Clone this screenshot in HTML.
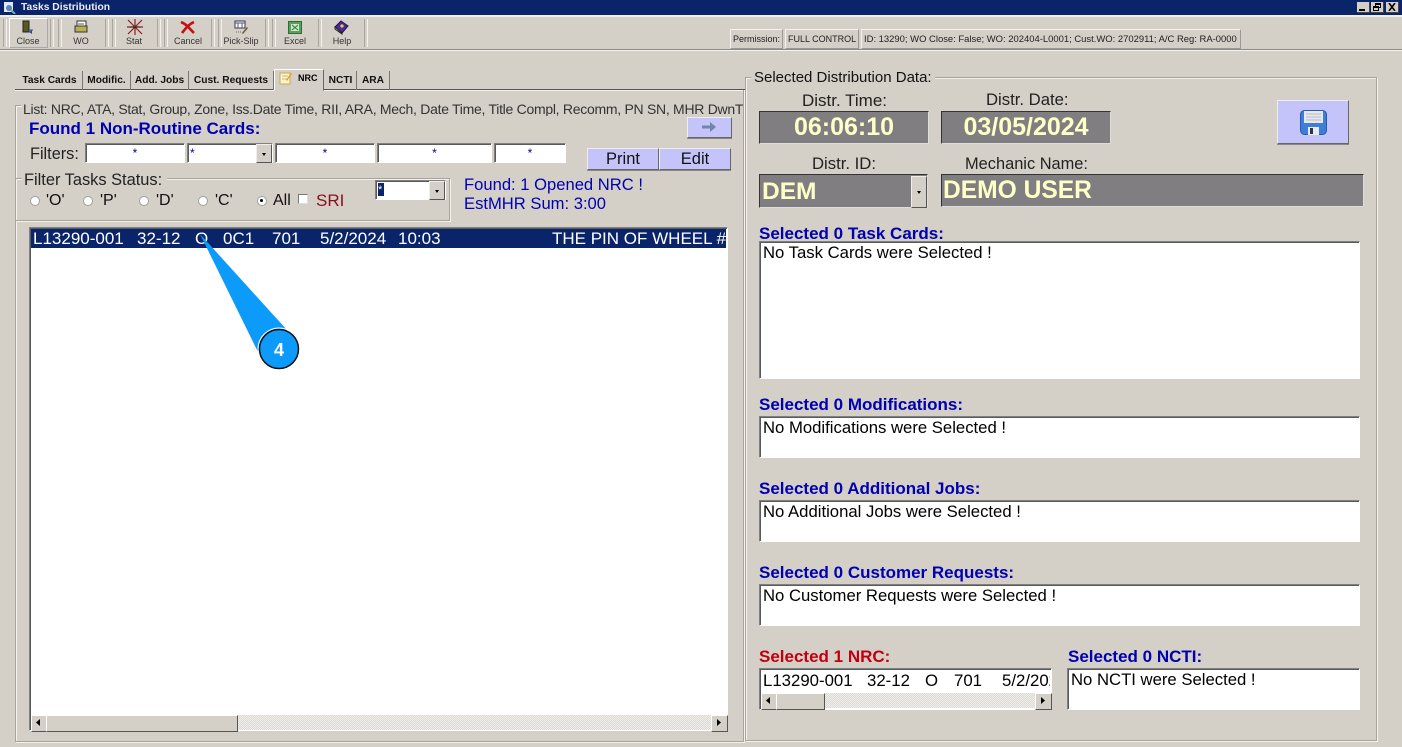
<!DOCTYPE html>
<html><head><meta charset="utf-8"><style>
html,body{margin:0;padding:0}
body{width:1402px;height:747px;overflow:hidden;background:#d4d0c8;position:relative;font-family:"Liberation Sans",sans-serif;color:#000}
.a,.t{position:absolute;box-sizing:border-box}
.t{white-space:pre;line-height:1}
.sunk{background:#fff;border:1px solid;border-color:#808080 #fff #fff #808080;box-shadow:inset 1px 1px 0 #5a5a5a}
.btn{background:#c4c4fa;border:1px solid;border-color:#eee #666 #666 #eee;text-align:center;font-size:16.5px;box-shadow:0 1px 0 #888}
.gray{background:#807e80;border:1px solid;border-color:#333 #ddd #ddd #333;color:#ffffc8;font-weight:bold}
.lab{font-size:16.7px}
.blue{color:#0000b0;font-weight:bold;font-size:17px}
.ln{background:#a8a49c;box-shadow:1px 1px 0 #f4f2ee}
.tab{position:absolute;top:71px;height:19px;border-right:1px solid #777;font:bold 10.2px "Liberation Sans",sans-serif;text-align:center;line-height:19px;color:#111;white-space:pre}
.tb{position:absolute;top:36px;font-size:9px;line-height:10px;width:50px;text-align:center;color:#333}
.sep{position:absolute;top:19px;width:2px;height:28px;border-left:1px solid #aaa69e;border-right:1px solid #f4f2ee}
.rb{position:absolute;top:196px;width:8px;height:8px;border-radius:50%;background:#fff;border:1px solid #a0a0a0}
.sb{position:absolute;background:#d4d0c8;border:1px solid;border-color:#fff #555 #555 #fff}
.drop{position:absolute;background:#d4d0c8;border:1px solid;border-color:#eee #555 #555 #eee}
.drop:after{content:"";position:absolute;left:50%;top:50%;margin:-1px 0 0 -2px;border:2px solid transparent;border-top:3px solid #000;border-bottom:0}
.star{color:#000090;font-size:12px;text-align:center;line-height:18px}
.tx{font-size:16.7px}
.track{background:repeating-conic-gradient(#dcdad4 0 25%,#efeeea 0 50%) 0 0/2px 2px}
</style></head><body>
<!-- title bar -->
<div class="a" style="left:0;top:0;width:1402px;height:15px;background:#0a246a"></div>
<svg class="a" style="left:3px;top:1px" width="13" height="13"><rect x="1" y="1" width="9" height="10" fill="#dfe8f5"/><circle cx="6" cy="7" r="3" fill="#5b86b8"/><path d="M8 9l4 4" stroke="#7aa" stroke-width="2"/></svg>
<div class="t" style="left:21px;top:3px;font-size:10.3px;font-weight:bold;color:#e8ecf4">Tasks Distribution</div>
<div class="a" style="left:1357px;top:2px;width:13px;height:11px;background:#d4d0c8;border-bottom:1px solid #444;border-right:1px solid #444"><div class="a" style="left:2px;top:7px;width:6px;height:2px;background:#000"></div></div>
<div class="a" style="left:1371px;top:2px;width:13px;height:11px;background:#d4d0c8;border-bottom:1px solid #444;border-right:1px solid #444"><div class="a" style="left:4px;top:1px;width:6px;height:5px;border:1px solid #000;border-top-width:2px"></div><div class="a" style="left:2px;top:4px;width:6px;height:5px;border:1px solid #000;border-top-width:2px;background:#d4d0c8"></div></div>
<div class="a" style="left:1386px;top:2px;width:13px;height:11px;background:#d4d0c8;border-bottom:1px solid #444;border-right:1px solid #444"><svg class="a" style="left:2px;top:1px" width="9" height="8"><path d="M1 0l6 8M7 0l-6 8" stroke="#000" stroke-width="1.6"/></svg></div>
<div class="a" style="left:0;top:15px;width:1402px;height:2px;background:#f0eee9"></div>

<!-- toolbar -->
<div class="a" style="left:0;top:49px;width:1402px;height:1px;background:#8c8a84"></div>
<div class="a" style="left:0;top:50px;width:1402px;height:1px;background:#f4f2ee"></div>
<div class="a" style="left:9px;top:18px;width:39px;height:30px;border:1px solid;border-color:#fff #aaa #aaa #fff"></div>
<div class="sep" style="left:3px"></div><div class="sep" style="left:50px"></div><div class="sep" style="left:58px"></div><div class="sep" style="left:105px"></div><div class="sep" style="left:112px"></div><div class="sep" style="left:157px"></div><div class="sep" style="left:164px"></div><div class="sep" style="left:211px"></div><div class="sep" style="left:218px"></div><div class="sep" style="left:265px"></div><div class="sep" style="left:272px"></div><div class="sep" style="left:318px"></div><div class="sep" style="left:364px"></div>
<div class="tb" style="left:3px">Close</div><div class="tb" style="left:56px">WO</div><div class="tb" style="left:109px">Stat</div><div class="tb" style="left:163px">Cancel</div><div class="tb" style="left:216px">Pick-Slip</div><div class="tb" style="left:270px">Excel</div><div class="tb" style="left:317px">Help</div>
<!-- toolbar icons -->
<svg class="a" style="left:21px;top:20px" width="14" height="15"><rect x="2" y="1" width="6" height="11" fill="#5a5a20" stroke="#222"/><path d="M8 12l3-2v4z" fill="#3344aa"/><path d="M8 10h4" stroke="#3344aa"/></svg>
<svg class="a" style="left:73px;top:20px" width="16" height="14"><rect x="4" y="1" width="9" height="6" fill="#fff" stroke="#333"/><rect x="2" y="6" width="12" height="6" fill="#b8b050" stroke="#333"/><path d="M5 4h6" stroke="#555"/></svg>
<svg class="a" style="left:127px;top:19px" width="16" height="16"><path d="M1 1l14 14M15 1L1 15M8 0v16M0 8h16" stroke="#8a2020" stroke-width="1.2"/><path d="M3 8h10" stroke="#222"/></svg>
<svg class="a" style="left:180px;top:21px" width="16" height="13"><path d="M1 1c5 2 7 5 13 11M14 1C9 3 6 7 2 12" stroke="#c81010" stroke-width="2.6" fill="none"/></svg>
<svg class="a" style="left:234px;top:20px" width="16" height="15"><rect x="1" y="1" width="10" height="7" fill="#fff" stroke="#335"/><path d="M1 3h10M4 3v5M8 3v5" stroke="#557"/><path d="M8 13l5-6 1 1-5 6z" fill="#665520"/><path d="M2 12h5" stroke="#666" stroke-dasharray="1 1"/></svg>
<svg class="a" style="left:288px;top:21px" width="14" height="14"><rect x="0.5" y="0.5" width="13" height="12" fill="#5aa05a" stroke="#2e6a3a"/><rect x="3" y="3" width="8" height="7" fill="#cfe6c8"/><path d="M4 4l6 5M10 4l-6 5" stroke="#2a7a3a"/></svg>
<svg class="a" style="left:334px;top:20px" width="15" height="15"><path d="M1 7l6-6 7 5-6 7z" fill="#4a2a9a" stroke="#221155"/><path d="M1 7v2l7 5v-1z" fill="#ddd" stroke="#222"/><circle cx="8" cy="6" r="1.6" fill="#f0d040"/></svg>
<!-- status panels -->
<div class="a" style="left:730px;top:29px;width:53px;height:20px;border:1px solid;border-color:#f4f2ee #999 #999 #f4f2ee;background:#d4d0c8"></div>
<div class="a" style="left:785px;top:29px;width:74px;height:20px;border:1px solid;border-color:#f4f2ee #999 #999 #f4f2ee"></div>
<div class="a" style="left:861px;top:29px;width:380px;height:20px;border:1px solid;border-color:#f4f2ee #999 #999 #f4f2ee"></div>
<div class="t" style="left:733px;top:35px;font-size:9px;color:#222">Permission:</div>
<div class="t" style="left:788px;top:35px;font-size:9px;color:#222">FULL CONTROL</div>
<div class="t" style="left:864px;top:35px;font-size:9.45px;color:#222">ID: 13290; WO Close: False; WO: 202404-L0001; Cust.WO: 2702911; A/C Reg: RA-0000</div>

<!-- tabs -->
<div class="a" style="left:15px;top:89px;width:730px;height:1px;background:#555"></div>
<div class="a" style="left:15px;top:90px;width:730px;height:1px;background:#f4f2ee"></div>
<div class="tab" style="left:17px;width:65px">Task Cards</div>
<div class="tab" style="left:83px;width:47px">Modific.</div>
<div class="tab" style="left:131px;width:57px">Add. Jobs</div>
<div class="tab" style="left:189px;width:84px">Cust. Requests</div>
<div class="a" style="left:274px;top:69px;width:50px;height:22px;background:#d4d0c8;border:1px solid;border-color:#fff #666 #d4d0c8 #fff"></div>
<svg class="a" style="left:279px;top:71px" width="14" height="14"><rect x="1" y="2" width="10" height="11" fill="#fff4c8" stroke="#c8a850"/><path d="M3 5h6M3 8h5" stroke="#c8b880"/><path d="M7 9l5-7 1 1-5 7z" fill="#e0a030"/></svg>
<div class="t" style="left:298px;top:74px;font-size:9px;font-weight:bold">NRC</div>
<div class="tab" style="left:325px;width:31px">NCTI</div>
<div class="tab" style="left:357px;width:32px">ARA</div>

<!-- left frame -->
<div class="a ln" style="left:15px;top:105px;width:1px;height:74px"></div>
<div class="a ln" style="left:15px;top:105px;width:6px;height:1px"></div>
<div class="t" style="left:23px;top:102px;font-size:14px;width:722px;overflow:hidden;color:#333;letter-spacing:-.28px">List: NRC, ATA, Stat, Group, Zone, Iss.Date Time, RII, ARA, Mech, Date Time, Title Compl, Recomm, PN SN, MHR DwnT</div>
<div class="t" style="left:29px;top:120px;font-size:17px;font-weight:bold;color:#0000b0">Found 1 Non-Routine Cards:</div>
<div class="t" style="left:30px;top:146px;font-size:16.3px;color:#222">Filters:</div>
<div class="a sunk star" style="left:85px;top:143px;width:100px;height:20px">*</div>
<div class="a sunk star" style="left:187px;top:143px;width:86px;height:20px;text-align:left;padding-left:2px">*<div class="drop" style="right:0;top:0;width:14px;height:17px"></div></div>
<div class="a sunk star" style="left:275px;top:143px;width:100px;height:20px">*</div>
<div class="a sunk star" style="left:377px;top:143px;width:115px;height:20px">*</div>
<div class="a sunk star" style="left:494px;top:143px;width:72px;height:20px">*</div>
<div class="a btn" style="left:687px;top:117px;width:45px;height:21px"></div>
<svg class="a" style="left:702px;top:122px" width="15" height="10"><path d="M0 3.5h8V0l6 5-6 5V6.500H0z" fill="#6f86a8"/></svg>
<div class="a btn" style="left:587px;top:148px;width:72px;height:22px;line-height:21px;color:#111">Print</div>
<div class="a btn" style="left:659px;top:148px;width:72px;height:22px;line-height:21px;color:#111">Edit</div>

<div class="a ln" style="left:15px;top:178px;width:435px;height:1px"></div>
<div class="a ln" style="left:15px;top:178px;width:1px;height:564px"></div>
<div class="a ln" style="left:449px;top:178px;width:1px;height:43px"></div>
<div class="a ln" style="left:15px;top:220px;width:435px;height:1px"></div>
<div class="a" style="left:22px;top:170px;width:145px;height:16px;background:#d4d0c8"></div>
<div class="t" style="left:24px;top:172px;font-size:16.4px;color:#222">Filter Tasks Status:</div>
<div class="rb" style="left:30px"></div><div class="t" style="left:46px;top:193px;font-size:16px;color:#111">'O'</div>
<div class="rb" style="left:83px"></div><div class="t" style="left:100px;top:193px;font-size:16px;color:#111">'P'</div>
<div class="rb" style="left:139px"></div><div class="t" style="left:156px;top:193px;font-size:16px;color:#111">'D'</div>
<div class="rb" style="left:198px"></div><div class="t" style="left:215px;top:193px;font-size:16px;color:#111">'C'</div>
<div class="rb" style="left:257px"></div><div class="a" style="left:260px;top:199px;width:3px;height:3px;border-radius:50%;background:#000"></div>
<div class="t" style="left:273px;top:193px;font-size:16px;color:#111">All</div>
<div class="a" style="left:298px;top:194px;width:10px;height:10px;background:#fff;border:1px solid;border-color:#777 #ddd #ddd #777"></div>
<div class="t" style="left:316px;top:192px;font-size:17px;color:#8a1020">SRI</div>
<div class="a sunk" style="left:375px;top:180px;width:71px;height:20px"><div class="a" style="left:2px;top:2px;width:6px;height:13px;background:#0a246a;color:#fff;font-size:11px;line-height:14px">*</div><div class="drop" style="right:0;top:0;width:14px;height:17px"></div></div>
<div class="t" style="left:464px;top:177px;font-size:16.6px;color:#0000b0">Found: 1 Opened NRC !</div>
<div class="t" style="left:464px;top:196px;font-size:16.6px;color:#0000b0">EstMHR Sum: 3:00</div>

<!-- list -->
<div class="a sunk" style="left:29px;top:227px;width:699px;height:504px"></div>
<div class="a" style="left:31px;top:229px;width:695px;height:19px;background:#0a246a;overflow:hidden;color:#fff;font-size:17px;line-height:19px;white-space:pre"><span class="a" style="left:2px;top:0">L13290-001</span><span class="a" style="left:106px;top:0">32-12</span><span class="a" style="left:164px;top:0">O</span><span class="a" style="left:192px;top:0">0C1</span><span class="a" style="left:241px;top:0">701</span><span class="a" style="left:289px;top:0">5/2/2024</span><span class="a" style="left:367px;top:0">10:03</span><span class="a" style="left:521px;top:0">THE PIN OF WHEEL #3</span></div>
<div class="a track" style="left:31px;top:715px;width:695px;height:15px"></div>
<div class="sb" style="left:31px;top:715px;width:15px;height:15px"><svg class="a" style="left:4px;top:3px" width="5" height="7"><path d="M4 0v7L0 3.500z"/></svg></div>
<div class="sb" style="left:46px;top:715px;width:190px;height:15px"></div>
<div class="sb" style="left:711px;top:715px;width:15px;height:15px"><svg class="a" style="left:5px;top:3px" width="5" height="7"><path d="M0 0v7l4-3.500z"/></svg></div>
<div class="a ln" style="left:15px;top:741px;width:729px;height:1px"></div>
<div class="a ln" style="left:743px;top:90px;width:1px;height:652px"></div>

<!-- callout -->
<svg class="a" style="left:190px;top:230px" width="120" height="145"><path d="M10 4L97 100 68 122z" fill="#0d9bfb"/><circle cx="89" cy="119" r="19.500" fill="#0d9bfb" stroke="#111" stroke-width="1.500"/><circle cx="89" cy="119" r="21" fill="none" stroke="#fff" stroke-width="1"/><text x="89" y="126" font-family="Liberation Sans" font-size="18" font-weight="bold" fill="#fff" text-anchor="middle">4</text></svg>

<!-- right frame -->
<div class="a ln" style="left:745px;top:77px;width:632px;height:1px"></div>
<div class="a ln" style="left:745px;top:77px;width:1px;height:664px"></div>
<div class="a ln" style="left:1376px;top:77px;width:1px;height:664px"></div>
<div class="a ln" style="left:745px;top:740px;width:632px;height:1px"></div>
<div class="a" style="left:751px;top:68px;width:184px;height:18px;background:#d4d0c8"></div>
<div class="t" style="left:754px;top:70px;font-size:15px;color:#111">Selected Distribution Data:</div>

<div class="t lab" style="left:802px;top:92px;color:#222;font-size:17px">Distr. Time:</div>
<div class="t lab" style="left:986px;top:92px;color:#222">Distr. Date:</div>
<div class="a gray" style="left:759px;top:111px;width:170px;height:33px;font-size:25px;text-align:center;line-height:30px">06:06:10</div>
<div class="a gray" style="left:941px;top:111px;width:170px;height:33px;font-size:25px;text-align:center;line-height:30px">03/05/2024</div>
<div class="a btn" style="left:1277px;top:100px;width:72px;height:44px"></div>
<svg class="a" style="left:1300px;top:110px" width="27" height="25"><rect x="0.500" y="0.500" width="26" height="24" rx="4" fill="#3d7fd8" stroke="#2a5aa8"/><rect x="4" y="1" width="19" height="12" fill="#e6e8ee"/><path d="M6 4h15M6 7h15M6 10h15" stroke="#b8bcc8"/><rect x="8" y="17" width="11" height="8" fill="#e8eaf0"/><rect x="10" y="18" width="3" height="6" fill="#334"/></svg>
<div class="t lab" style="left:812px;top:156px;color:#222">Distr. ID:</div>
<div class="t lab" style="left:965px;top:156px;color:#222;font-size:16.4px">Mechanic Name:</div>
<div class="a gray" style="left:759px;top:174px;width:169px;height:34px;font-size:24.5px;line-height:33px;padding-left:2px">DEM<div class="drop" style="right:0;top:1px;width:14px;height:30px;color:#000"></div></div>
<div class="a gray" style="left:941px;top:174px;width:423px;height:33px;font-size:24.6px;line-height:31px;padding-left:1px">DEMO USER</div>

<div class="t blue" style="left:759px;top:225px">Selected 0 Task Cards:</div>
<div class="a sunk" style="left:759px;top:241px;width:601px;height:138px"></div>
<div class="t tx" style="left:763px;top:245px">No Task Cards were Selected !</div>

<div class="t blue" style="left:759px;top:396px">Selected 0 Modifications:</div>
<div class="a sunk" style="left:759px;top:416px;width:601px;height:42px"></div>
<div class="t tx" style="left:763px;top:420px">No Modifications were Selected !</div>

<div class="t blue" style="left:759px;top:480px">Selected 0 Additional Jobs:</div>
<div class="a sunk" style="left:759px;top:500px;width:601px;height:42px"></div>
<div class="t tx" style="left:763px;top:504px">No Additional Jobs were Selected !</div>

<div class="t blue" style="left:759px;top:564px">Selected 0 Customer Requests:</div>
<div class="a sunk" style="left:759px;top:584px;width:601px;height:42px"></div>
<div class="t tx" style="left:763px;top:588px">No Customer Requests were Selected !</div>

<div class="t blue" style="left:759px;top:648px;color:#c00010">Selected 1 NRC:</div>
<div class="a sunk" style="left:759px;top:668px;width:293px;height:42px"></div>
<div class="a" style="left:763px;top:672px;width:287px;height:17px;overflow:hidden;font-size:16.8px;line-height:17px;white-space:pre"><span class="a" style="left:0">L13290-001</span><span class="a" style="left:104px">32-12</span><span class="a" style="left:162px">O</span><span class="a" style="left:191px">701</span><span class="a" style="left:239px">5/2/2024</span></div>
<div class="a track" style="left:761px;top:693px;width:289px;height:15px"></div>
<div class="sb" style="left:761px;top:693px;width:15px;height:15px"><svg class="a" style="left:4px;top:3px" width="5" height="7"><path d="M4 0v7L0 3.500z"/></svg></div>
<div class="sb" style="left:776px;top:693px;width:47px;height:15px"></div>
<div class="sb" style="left:1035px;top:693px;width:15px;height:15px"><svg class="a" style="left:5px;top:3px" width="5" height="7"><path d="M0 0v7l4-3.500z"/></svg></div>

<div class="t blue" style="left:1068px;top:648px">Selected 0 NCTI:</div>
<div class="a sunk" style="left:1067px;top:668px;width:293px;height:42px"></div>
<div class="t tx" style="left:1071px;top:672px">No NCTI were Selected !</div>
</body></html>
